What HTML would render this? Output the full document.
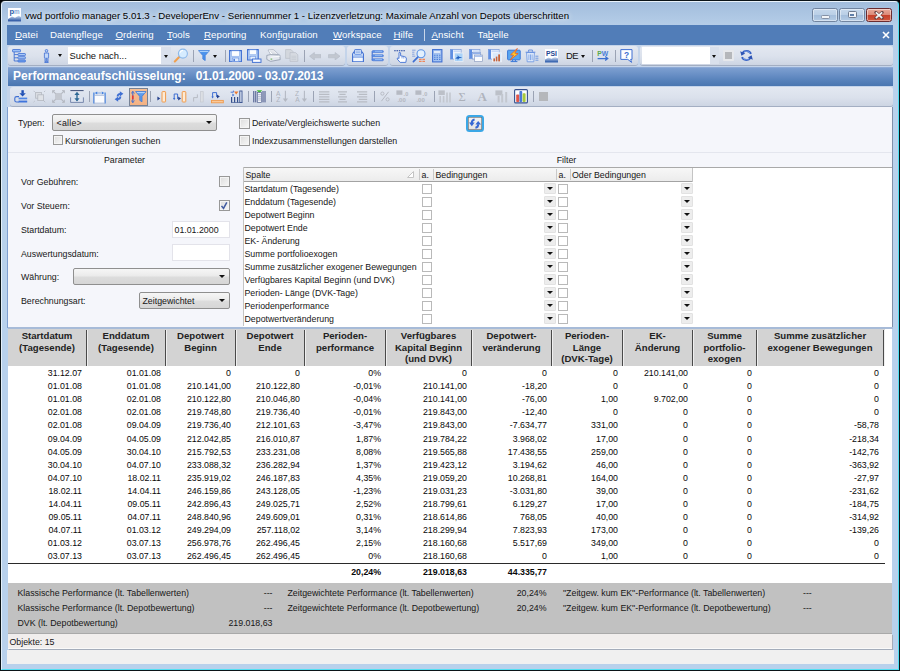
<!DOCTYPE html><html><head><meta charset="utf-8"><title>vwd portfolio manager</title><style>
html,body{margin:0;padding:0;background:#000;}
body{width:900px;height:671px;position:relative;overflow:hidden;font-family:"Liberation Sans",sans-serif;}
div,svg{position:absolute;box-sizing:border-box;}
.t{white-space:nowrap;color:#161616;}
.w{white-space:nowrap;color:#fff;}
.tb{background:linear-gradient(#e3e8f1,#dbe1ec 55%,#cdd5e3);border-radius:3px;box-shadow:0 1px 0 #a3aec2;}
.sep{width:1px;background:#9ba3b4;}
.dd{border:1px solid #8f8f8f;border-radius:2px;background:linear-gradient(#f6f6f6,#ebebeb 45%,#dcdcdc 55%,#d6d6d6);}
.arr{width:0;height:0;border-left:3.5px solid transparent;border-right:3.5px solid transparent;border-top:3.8px solid #111;}
.cb{width:10.6px;height:10.6px;border:1px solid #989898;background:linear-gradient(135deg,#dcdcdc,#f8f8f8);box-shadow:inset 0 0 0 1px #f4f4f4;}
.gcb{width:10px;height:10px;border:1px solid #b9b9b9;background:#fff;}
.inp{border:1px solid #e3e3ea;background:#fff;}
.hd{background:#d3d3d3;}
.num{white-space:nowrap;color:#080808;text-align:right;font-size:8.8px;line-height:13px;height:13px;}
.hc{white-space:nowrap;color:#222;text-align:center;font-weight:bold;font-size:9.6px;line-height:11.5px;}
</style></head><body>
<div style="left:0px;top:0px;width:900px;height:671px;background:#0b1418;border-radius:5px 5px 0 0;"></div>
<div style="left:1px;top:1px;width:898px;height:669px;border-radius:4px 4px 0 0;border:1px solid;border-color:#e9f3fb #52dff2 #52dff2 #e4f0fa;background:linear-gradient(#a2bddc 0px,#b6cee8 24px,#b8d1ec 60px,#b8d1ec 100%);"></div>
<svg style="left:8px;top:8px" width="13" height="13.5" viewBox="0 0 13 13.5"><defs><linearGradient id="apg" x1="0" y1="0" x2="0" y2="1"><stop offset="0" stop-color="#c9d8ee"/><stop offset="1" stop-color="#1c4a9c"/></linearGradient></defs><rect x="0" y="0" width="13" height="13.5" fill="#fdfeff"/><path d="M0 11 L4 8.4 L7 9.8 L10.6 7.8 L13 9 L13 13.5 L0 13.5 Z" fill="url(#apg)"/><text x="1.6" y="6.4" font-family="Liberation Sans" font-weight="bold" font-size="7.6" fill="#2d5ba5">p</text><text x="6" y="5.8" font-family="Liberation Sans" font-weight="bold" font-size="6.4" fill="#86a6d6" textLength="5.6" lengthAdjust="spacingAndGlyphs">m</text></svg>
<div class="t" style="left:25px;top:9.7px;font-size:9.68px;line-height:12px;color:#000;text-shadow:0 0 5px rgba(255,255,255,.85),0 0 8px rgba(255,255,255,.6);">vwd portfolio manager 5.01.3 - DeveloperEnv - Seriennummer 1 - Lizenzverletzung: Maximale Anzahl von Depots überschritten</div>
<div style="left:812px;top:8px;width:25.5px;height:14px;border:1px solid #71849f;border-radius:2.5px;background:linear-gradient(#c6d8ec,#bacfe6 48%,#a4bedc 52%,#b4cbe4);box-shadow:inset 0 0 0 1px rgba(255,255,255,.45);"></div><div style="left:839.3px;top:8px;width:25.4px;height:14px;border:1px solid #71849f;border-radius:2.5px;background:linear-gradient(#c6d8ec,#bacfe6 48%,#a4bedc 52%,#b4cbe4);box-shadow:inset 0 0 0 1px rgba(255,255,255,.45);"></div><div style="left:866px;top:8px;width:26px;height:14px;border:1px solid #6a2c30;border-radius:2.5px;background:linear-gradient(#e9ab9c,#dc8a78 48%,#c6402a 52%,#d0583e);box-shadow:inset 0 0 0 1px rgba(255,255,255,.45);"></div><div style="left:820.6px;top:14.6px;width:9px;height:4.4px;background:#f1f4f8;border:1px solid #8591a5;border-radius:1.5px;"></div><div style="left:847.8px;top:11.3px;width:9px;height:7px;background:#f0f3f8;border:1px solid #6f7b8e;border-radius:1.5px;"></div><div style="left:850.3px;top:13.8px;width:4px;height:2.5px;background:#5f7fa9;"></div><svg style="left:874px;top:11px" width="10" height="8.5" viewBox="0 0 10 8.5"><path d="M1.8 1.4 L8.2 7 M8.2 1.4 L1.8 7" stroke="#6a4444" stroke-width="3" stroke-linecap="round"/><path d="M1.8 1.4 L8.2 7 M8.2 1.4 L1.8 7" stroke="#f4f4f4" stroke-width="1.7" stroke-linecap="butt"/></svg>
<div style="left:7px;top:25px;width:886px;height:20px;background:#517db8;"></div>
<div class="w" style="left:15px;top:29.0px;font-size:9.7px;line-height:12px;color:#fff;letter-spacing:0.05px;"><u>D</u>atei</div>
<div class="w" style="left:50px;top:29.0px;font-size:9.7px;line-height:12px;color:#fff;letter-spacing:0.05px;">Daten<u>p</u>flege</div>
<div class="w" style="left:115.5px;top:29.0px;font-size:9.7px;line-height:12px;color:#fff;letter-spacing:0.05px;"><u>O</u>rdering</div>
<div class="w" style="left:167px;top:29.0px;font-size:9.7px;line-height:12px;color:#fff;letter-spacing:0.05px;"><u>T</u>ools</div>
<div class="w" style="left:204px;top:29.0px;font-size:9.7px;line-height:12px;color:#fff;letter-spacing:0.05px;"><u>R</u>eporting</div>
<div class="w" style="left:260px;top:29.0px;font-size:9.7px;line-height:12px;color:#fff;letter-spacing:0.05px;">Kon<u>f</u>iguration</div>
<div class="w" style="left:333px;top:29.0px;font-size:9.7px;line-height:12px;color:#fff;letter-spacing:0.05px;"><u>W</u>orkspace</div>
<div class="w" style="left:393.5px;top:29.0px;font-size:9.7px;line-height:12px;color:#fff;letter-spacing:0.05px;"><u>H</u>ilfe</div>
<div class="w" style="left:431.5px;top:29.0px;font-size:9.7px;line-height:12px;color:#fff;letter-spacing:0.05px;"><u>A</u>nsicht</div>
<div class="w" style="left:477.5px;top:29.0px;font-size:9.7px;line-height:12px;color:#fff;letter-spacing:0.05px;">Ta<u>b</u>elle</div>
<div style="left:424px;top:29px;width:1px;height:12px;background:#c9d6ea;"></div>
<svg style="left:882px;top:30.5px" width="8" height="8" viewBox="0 0 8 8"><path d="M1 1 L7 7 M7 1 L1 7" stroke="#fff" stroke-width="1.6"/></svg>
<div style="left:7px;top:45px;width:886px;height:62px;background:#c4d4ea;"></div>
<div class="tb" style="left:8px;top:46px;width:337px;height:19px;"></div>
<div class="tb" style="left:347px;top:46px;width:41px;height:19px;"></div>
<div class="tb" style="left:390px;top:46px;width:248px;height:19px;"></div>
<div class="tb" style="left:640px;top:46px;width:253px;height:19px;"></div>
<svg style="left:12px;top:49px" width="14" height="14" viewBox="0 0 14 14"><rect x="0.5" y="0.5" width="8" height="2.4" rx="0.6" fill="#9cc0f6" stroke="#3f6fd2" stroke-width="0.8"/><path d="M2.2 3 V12 M2.2 5.6 H6 M2.2 8.8 H6 M2.2 12 H6" stroke="#3f6fd2" stroke-width="0.9" fill="none"/><rect x="6" y="4.5" width="7.4" height="2.1" rx="0.6" fill="#a8c8f8" stroke="#3f6fd2" stroke-width="0.8"/><rect x="6" y="7.7" width="7.4" height="2.1" rx="0.6" fill="#a8c8f8" stroke="#3f6fd2" stroke-width="0.8"/><rect x="6" y="10.9" width="7.4" height="2.1" rx="0.6" fill="#6fa0ee" stroke="#3f6fd2" stroke-width="0.8"/></svg><svg style="left:42.5px;top:49px" width="7" height="14" viewBox="0 0 7 14"><circle cx="3.5" cy="1.8" r="1.3" fill="#b9d2f8" stroke="#3f6fd2" stroke-width="0.8"/><path d="M1.4 4 H5.6 V8.6 H5 V12.8 H3.9 V9.2 H3.1 V12.8 H2 V8.6 H1.4 Z" fill="#c3d8f8" stroke="#3f6fd2" stroke-width="0.8"/><path d="M1.4 13.4 H5.6" stroke="#3f6fd2" stroke-width="0.9"/></svg><div class="arr" style="left:57.8px;top:54.3px;border-left-width:2.5px;border-right-width:2.5px;border-top-width:3px;"></div><div style="left:68px;top:47px;width:93px;height:17px;background:#fff;"></div><div class="t" style="left:69.5px;top:50px;font-size:9.4px;line-height:12px;color:#111;">Suche nach...</div><div style="left:161px;top:47px;width:10px;height:17px;background:#d9e0ec;"></div><div class="arr" style="left:163.5px;top:54.8px;border-left-width:2.5px;border-right-width:2.5px;border-top-width:3px;"></div><svg style="left:173px;top:48px" width="16" height="15" viewBox="0 0 16 15"><path d="M1.8 13.4 L6.2 9" stroke="#f0a050" stroke-width="2.1" stroke-linecap="round"/><circle cx="9.9" cy="5.6" r="4.5" fill="#d6ecff" stroke="#8db9ea" stroke-width="1.1"/><path d="M7 4.6 A3.2 3.2 0 0 1 10 2.4" stroke="#fff" stroke-width="1.2" fill="none"/></svg><div class="sep" style="left:193px;top:49.5px;height:12px;"></div><svg style="left:198px;top:50px" width="12" height="11" viewBox="0 0 12 11"><path d="M0.5 0.6 H11.5 L7.2 5.6 V10.6 L4.8 9 V5.6 Z" fill="#4a92ec" stroke="#3a7ada" stroke-width="0.7" stroke-linejoin="round"/><path d="M1.6 1.5 H10.4" stroke="#a9d0fa" stroke-width="1.1"/></svg><div class="arr" style="left:212.7px;top:54.6px;border-left-width:2.5px;border-right-width:2.5px;border-top-width:3px;"></div><div class="sep" style="left:224.5px;top:49.5px;height:12px;"></div><svg style="left:229px;top:49.5px" width="13" height="12.5" viewBox="0 0 13 12.5"><path d="M0.6 0.6 H12.4 V11.9 H0.6 Z" fill="#b9d2f6" stroke="#3f6fd2" stroke-width="1.1"/><rect x="2.6" y="0.9" width="7.8" height="5.3" fill="#fbfdff" stroke="#7fa4e6" stroke-width="0.5"/><rect x="3.2" y="8" width="6.6" height="3.6" fill="#e4eefc" stroke="#5f8ade" stroke-width="0.6"/><rect x="4.4" y="8.9" width="1.6" height="2.2" fill="#4f7fd8"/></svg><svg style="left:247px;top:48.5px" width="14.5" height="14" viewBox="0 0 14.5 14"><path d="M0.6 0.6 H11.2 V11 H0.6 Z" fill="#b9d2f6" stroke="#3f6fd2" stroke-width="1.1"/><rect x="2.4" y="0.9" width="7" height="4.8" fill="#fbfdff" stroke="#7fa4e6" stroke-width="0.5"/><rect x="3" y="7.2" width="5.6" height="3.4" fill="#e4eefc" stroke="#5f8ade" stroke-width="0.6"/><rect x="5.4" y="10" width="8.6" height="3.4" fill="#e6effc" stroke="#3f6fd2" stroke-width="0.9"/><path d="M7 11.7 H12.6" stroke="#fff" stroke-width="1"/></svg><svg style="left:266px;top:49px" width="15" height="13" viewBox="0 0 15 13"><path d="M2 1 L7.4 0.4 L12.6 5.4 L5 6.2 Z" fill="#fcfdfe" stroke="#a4acbb" stroke-width="0.7"/><path d="M4 2.2 L8 1.8 M5 3.4 L9.4 3 M6 4.6 L10.6 4.2" stroke="#b9c0cc" stroke-width="0.6"/><path d="M0.8 6.4 L4.4 5.6 L13.8 6 L14.2 10.6 L4.6 12.4 L0.8 10.4 Z" fill="#e3e7ee" stroke="#8f99ab" stroke-width="0.8" stroke-linejoin="round"/><path d="M4.6 8.2 L14 7.2" stroke="#fff" stroke-width="0.8"/><rect x="4.6" y="9.6" width="1.6" height="1" fill="#5fb046"/></svg><svg style="left:285px;top:49px" width="13.5" height="13" viewBox="0 0 13.5 13"><path d="M0.6 0.6 H6 L8 2.6 V9.4 H0.6 Z" fill="#d3d7de" stroke="#bcc1cb" stroke-width="0.8"/><path d="M5 3.6 H10.6 L12.8 5.8 V12.4 H5 Z" fill="#d6dae1" stroke="#bcc1cb" stroke-width="0.8"/><path d="M6.4 7.2 H11.2 M6.4 8.8 H11.2 M6.4 10.4 H11.2" stroke="#c2c7d0" stroke-width="0.7"/></svg><div class="sep" style="left:303.5px;top:49.5px;height:12px;"></div><svg style="left:308.5px;top:51.5px" width="12.5" height="8.5" viewBox="0 0 12.5 8.5"><path d="M0.5 4.2 L5.4 0.5 V2.6 H12 V5.8 H5.4 V8 Z" fill="#c2c7d0" stroke="#b4bac6" stroke-width="0.6" stroke-linejoin="round"/></svg><svg style="left:327.5px;top:51.5px" width="12.5" height="8.5" viewBox="0 0 12.5 8.5"><path d="M12 4.2 L7.1 0.5 V2.6 H0.5 V5.8 H7.1 V8 Z" fill="#c2c7d0" stroke="#b4bac6" stroke-width="0.6" stroke-linejoin="round"/></svg><svg style="left:351.5px;top:48.5px" width="12" height="13.5" viewBox="0 0 12 13.5"><path d="M0.6 5 L1.8 3 H10.2 L11.4 5 V12.9 H0.6 Z" fill="#f2f7fe" stroke="#3f6fd2" stroke-width="1.1" stroke-linejoin="round"/><rect x="2.6" y="0.6" width="6.8" height="4.8" rx="0.6" fill="#dce9fb" stroke="#3f6fd2" stroke-width="0.9"/><path d="M3.8 2.2 H8.2 M3.8 3.6 H8.2" stroke="#7fa3e2" stroke-width="0.7"/><path d="M1 8 H11" stroke="#3f6fd2" stroke-width="0.9"/><rect x="1.4" y="5.6" width="9.2" height="2" fill="#a9c6f5"/></svg><svg style="left:370.5px;top:50px" width="13" height="12" viewBox="0 0 13 12"><path d="M1.2 1.4 V10.6" stroke="#3f6fd2" stroke-width="1.1"/><rect x="1.2" y="0.6" width="11.2" height="2" rx="0.8" fill="#5f95ea" stroke="#3f6fd2" stroke-width="0.6"/><rect x="1.2" y="4.7" width="11.2" height="2" rx="0.8" fill="#5f95ea" stroke="#3f6fd2" stroke-width="0.6"/><rect x="1.2" y="8.8" width="11.2" height="2" rx="0.8" fill="#5f95ea" stroke="#3f6fd2" stroke-width="0.6"/><path d="M4 1.3 H11 M4 5.4 H11 M4 9.5 H11" stroke="#a9cbf8" stroke-width="0.7"/></svg><svg style="left:394px;top:50px" width="14" height="13" viewBox="0 0 14 13"><path d="M0.2 0.7 H11.6" stroke="#1c3f9a" stroke-width="1.1" stroke-dasharray="1.5 0.8"/><path d="M5 2.6 Q6 2 6.6 2.8 V5.8 L10.6 6.6 Q12.6 7.2 12.4 9 L11.8 12.4 H6.2 L3.2 9 Q3 7.8 4.2 8 L5 8.6 Z" fill="#fdfeff" stroke="#3f6fd2" stroke-width="0.9" stroke-linejoin="round"/><path d="M8 6.4 V8.4 M9.8 6.8 V8.6" stroke="#3f6fd2" stroke-width="0.6"/></svg><svg style="left:412px;top:49px" width="15" height="14" viewBox="0 0 15 14"><path d="M0.4 1.2 H3.4 M0.4 3.2 H2.6 M0.4 5.2 H2.6 M0.4 7.2 H3.2" stroke="#3f6fd2" stroke-width="0.8" stroke-dasharray="1.3 0.6"/><circle cx="9" cy="4.8" r="4" fill="#e2f0fe" stroke="#5d94e6" stroke-width="1.1"/><path d="M5.8 8.2 L1.4 12.6" stroke="#3f6fd2" stroke-width="1.7" stroke-linecap="round"/><path d="M7 10.4 H13.6 M7 12.4 H13.6" stroke="#f0875a" stroke-width="1.3" stroke-dasharray="2.6 0.8"/></svg><svg style="left:432px;top:49px" width="10.5" height="13.5" viewBox="0 0 10.5 13.5"><rect x="0.6" y="0.6" width="9.3" height="12.3" fill="#a4c4f2" stroke="#3f6fd2" stroke-width="1.1"/><rect x="1.8" y="1.8" width="6.9" height="2.6" fill="#dfeaf9" stroke="#7fa4e6" stroke-width="0.4"/><path d="M2 6.2 H8.6 M2 8.3 H8.6 M2 10.4 H8.6" stroke="#4f7fd8" stroke-width="1.1" stroke-dasharray="1.5 1"/></svg><svg style="left:450px;top:49px" width="13.5" height="13" viewBox="0 0 13.5 13"><rect x="0.5" y="0.5" width="10.6" height="9.6" fill="#eef4fd" stroke="#7fa0dc" stroke-width="0.8"/><path d="M0.5 0.5 H3 V10 H0.5 Z" fill="#5f8fe2"/><rect x="3.6" y="1.4" width="7" height="1.6" fill="#c6d8f6"/><rect x="4.6" y="4" width="8.4" height="8.4" fill="#a9d2f8" stroke="#e9eef6" stroke-width="0.8"/><path d="M5.2 9.6 L8 7.2 L7.2 5.4 L9 7.8 L12.4 8.4 L9 9.2 L7.6 11.6 L7.8 9.8 Z" fill="#1f5fc0"/></svg><svg style="left:469px;top:49px" width="14" height="13.5" viewBox="0 0 14 13.5"><rect x="0.5" y="0.5" width="10.4" height="9.2" fill="#eef4fd" stroke="#7fa0dc" stroke-width="0.8"/><path d="M0.5 0.5 H3 V9.6 H0.5 Z" fill="#5f8fe2"/><rect x="3.6" y="1.4" width="6.8" height="1.4" fill="#c6d8f6"/><rect x="3.4" y="3.4" width="8" height="6.6" fill="#f4f8fe" stroke="#7f9cd2" stroke-width="0.7"/><rect x="3.8" y="3.8" width="7.2" height="1.4" fill="#8fb0ea"/><rect x="5.6" y="6" width="7.8" height="6.6" fill="#fafcff" stroke="#8f9fc0" stroke-width="0.7"/><rect x="6" y="6.4" width="7" height="1.4" fill="#9ab6ea"/></svg><svg style="left:487.5px;top:49px" width="14" height="13.5" viewBox="0 0 14 13.5"><rect x="0.5" y="0.5" width="10.6" height="9.6" fill="#eef4fd" stroke="#7fa0dc" stroke-width="0.8"/><path d="M0.5 0.5 H3 V10 H0.5 Z" fill="#5f8fe2"/><rect x="3.6" y="1.4" width="7" height="1.6" fill="#c6d8f6"/><rect x="4.4" y="3.8" width="9" height="9" fill="#d9e9fb" stroke="#eef2f8" stroke-width="0.8"/><rect x="5.4" y="9.4" width="1.6" height="3" fill="#c8643a"/><rect x="7.8" y="7.6" width="1.6" height="4.8" fill="#c8643a"/><rect x="10.2" y="5.4" width="1.8" height="7" fill="#c8643a"/></svg><svg style="left:506.5px;top:48px" width="14" height="15" viewBox="0 0 14 15"><rect x="0.6" y="2.2" width="12.6" height="9.6" rx="0.8" fill="#58a6f0" stroke="#3a78d8" stroke-width="1"/><path d="M3.6 13.6 H10.4 M5.6 12 V13.4 M8.4 12 V13.4" stroke="#3a78d8" stroke-width="1"/><path d="M10.4 0.4 L3.6 6.8 L6.6 7.2 L3.2 12 L11.2 5.6 L7.8 5.2 Z" fill="#ffcf2a" stroke="#ee5a24" stroke-width="0.8" stroke-linejoin="round"/></svg><svg style="left:525px;top:49px" width="14" height="13.5" viewBox="0 0 14 13.5"><path d="M1.6 3.6 H9.4 L8.8 12.8 H2.2 Z" fill="#e6effc" stroke="#6f98e2" stroke-width="0.9"/><path d="M0.6 3.2 H10.4 M3.6 2.8 V1 H7.4 V2.8" stroke="#5f8ade" stroke-width="0.9" fill="none"/><path d="M3.9 5.4 V11.2 M5.5 5.4 V11.2 M7.1 5.4 V11.2" stroke="#6f98e2" stroke-width="0.8"/><path d="M10.4 7.2 H13.4 M10.4 9.2 H13.4 M10.4 11.2 H13.4" stroke="#6f98e2" stroke-width="1"/></svg><svg style="left:544.5px;top:49px" width="13" height="13.5" viewBox="0 0 13 13.5"><defs><linearGradient id="psg" x1="0" y1="0" x2="0" y2="1"><stop offset="0" stop-color="#dfe8f6"/><stop offset="1" stop-color="#1d4fa4"/></linearGradient></defs><rect x="0" y="0" width="13" height="13.5" fill="#fdfeff"/><path d="M0 10.4 L3.6 8.4 L6.4 9.8 L10 8 L13 9.2 V13.5 H0 Z" fill="url(#psg)"/><text x="1" y="6.6" font-family="Liberation Sans" font-weight="bold" font-size="7" fill="#1f4690" textLength="11" lengthAdjust="spacingAndGlyphs">PSI</text></svg><div class="t" style="left:566px;top:50px;font-size:9.4px;line-height:12px;color:#111;letter-spacing:-0.6px;">DE</div><div class="arr" style="left:580.8px;top:54.6px;border-left-width:2.5px;border-right-width:2.5px;border-top-width:3px;"></div><div class="sep" style="left:592px;top:49.5px;height:12px;"></div><svg style="left:596.5px;top:50px" width="13" height="12" viewBox="0 0 13 12"><text x="0.2" y="5.8" font-family="Liberation Sans" font-weight="bold" font-size="6.8" fill="#5aa84a">P</text><text x="4.8" y="5.8" font-family="Liberation Sans" font-weight="bold" font-size="6.8" fill="#4a7fd8">W</text><path d="M0.6 8.6 H10 M8.2 6.6 L10.8 8.6 L8.2 10.6" stroke="#3a6fd0" stroke-width="1.2" fill="none"/></svg><div class="sep" style="left:615px;top:49.5px;height:12px;"></div><svg style="left:620px;top:48.5px" width="13" height="14" viewBox="0 0 13 14"><path d="M0.8 0.6 H12 V10.4 H10.6 L11.6 13.4 L7.8 10.4 H0.8 Z" fill="#fdfeff" stroke="#3f6fd2" stroke-width="1" stroke-linejoin="round"/><text x="4" y="8.6" font-family="Liberation Sans" font-weight="bold" font-size="8.4" fill="#3f6fd2">?</text></svg><div style="left:642px;top:47px;width:68px;height:17px;background:#fff;"></div><div style="left:710px;top:47px;width:9px;height:17px;background:#d9e0ec;"></div><div class="arr" style="left:711.8px;top:54.8px;border-left-width:2.5px;border-right-width:2.5px;border-top-width:3px;"></div><div style="left:723px;top:50px;width:11px;height:11px;background:#e6e8ec;border-radius:1px;"></div><div style="left:725px;top:52px;width:7px;height:7px;background:#b5b7bb;"></div><svg style="left:740px;top:49px" width="13" height="13" viewBox="0 0 13 13"><path d="M11 4.8 A5 5 0 0 0 2.4 4" stroke="#3560c4" stroke-width="1.9" fill="none"/><path d="M0.2 2.2 L1.4 6.8 L5.2 4.6 Z" fill="#2f55b4"/><path d="M2 8.2 A5 5 0 0 0 10.6 9" stroke="#3560c4" stroke-width="1.9" fill="none"/><path d="M12.8 10.8 L11.6 6.2 L7.8 8.4 Z" fill="#2f55b4"/><path d="M10 4 A4 4 0 0 0 4 3.2 M3 9 A4 4 0 0 0 9 9.8" stroke="#8fb2ee" stroke-width="0.6" fill="none"/></svg>
<div style="left:8px;top:67px;width:885px;height:19px;background:linear-gradient(#7d9fd0,#6a90c6 35%,#5681ba 70%,#4a76b0);border-top:1px solid #8eaad6;"></div>
<div class="w" style="left:13px;top:70.0px;font-size:12.05px;line-height:12px;color:#fff;font-weight:bold;">Performanceaufschlüsselung:&nbsp;&nbsp; <span style='letter-spacing:-0.16px'>01.01.2000 - 03.07.2013</span></div>
<div class="tb" style="left:10px;top:87px;width:883px;height:19px;"></div>
<svg style="left:14px;top:90px" width="14" height="13" viewBox="0 0 14 13"><path d="M8.6 0.2 V3.6" stroke="#1f4fb4" stroke-width="2.4"/><path d="M5.4 3.2 H11.8 L8.6 6.6 Z" fill="#1f4fb4"/><path d="M5 6.6 H2.6 Q0.8 6.6 0.8 8.2 V10.4 Q0.8 12 2.6 12 H5" fill="none" stroke="#3f6fd2" stroke-width="1.1"/><rect x="4.6" y="7.6" width="8.6" height="1.7" fill="#4f86e6"/><rect x="4.6" y="10.6" width="8.6" height="1.9" fill="#3f74dc"/></svg><svg style="left:33px;top:90px" width="13" height="13" viewBox="0 0 13 13"><rect x="2.6" y="2.4" width="5.8" height="5.8" fill="#d9dce2" stroke="#b4b8c1" stroke-width="0.8"/><rect x="4.8" y="4.8" width="5.8" height="5.8" fill="#dfe2e7" stroke="#b4b8c1" stroke-width="0.8"/><path d="M0.6 0.8 L1.8 2 M12.2 0.8 L11 2 M0.6 12.2 L1.8 11 M12.2 12.2 L11 11" stroke="#b4b8c1" stroke-width="0.8"/></svg><svg style="left:52px;top:90px" width="13" height="13" viewBox="0 0 13 13"><rect x="3.6" y="3.6" width="5.8" height="5.8" fill="#c3c7cf" stroke="#b9bdc6" stroke-width="0.6"/><path d="M0.8 1 L3.6 3.6 M12.2 1 L9.4 3.6 M0.8 12 L3.6 9.4 M12.2 12 L9.4 9.4" stroke="#b4b8c1" stroke-width="1.2"/><path d="M0.4 3.2 V0.6 H3 M10 0.6 H12.6 V3.2 M0.4 9.8 V12.4 H3 M10 12.4 H12.6 V9.8" stroke="#b4b8c1" stroke-width="0.9" fill="none"/></svg><svg style="left:70px;top:90px" width="14" height="13" viewBox="0 0 14 13"><path d="M0.4 0.6 H13.6" stroke="#3f5078" stroke-width="1"/><path d="M0.6 7.4 V12.4 H13.4 V7.4" stroke="#6d7fa6" stroke-width="0.9" fill="#dde4f0"/><path d="M7 3 V10.4" stroke="#2f6a96" stroke-width="1.4"/><path d="M4.4 5 L7 1.8 L9.6 5 Z M4.4 8.2 L7 11.4 L9.6 8.2 Z" fill="#2f6a96"/></svg><div class="sep" style="left:88.5px;top:90.5px;height:11.5px;"></div><svg style="left:93px;top:90.5px" width="13" height="13" viewBox="0 0 13 13"><path d="M0.9 1.4 V12.4 M12.1 1.4 V12.4" stroke="#3f7fe0" stroke-width="1.2"/><rect x="1.6" y="4.4" width="9.8" height="7.6" fill="#fafbfe" stroke="#9ab0d8" stroke-width="0.6"/><path d="M4.4 2 H8.6" stroke="#3f7fe0" stroke-width="0.9" stroke-dasharray="1.2 0.8"/><path d="M1.8 2 L4.2 0.4 V3.6 Z M11.2 2 L8.8 0.4 V3.6 Z" fill="#3f7fe0"/></svg><svg style="left:113px;top:91px" width="12" height="11" viewBox="0 0 12 11"><path d="M4.6 5.4 Q4.6 2.8 7.4 2.8" stroke="#3f6fd2" stroke-width="1.8" fill="none"/><path d="M6.8 0.2 L10.4 2.8 L6.8 5.4 Z" fill="#3f6fd2"/><path d="M7.4 5.6 Q7.4 8.2 4.6 8.2" stroke="#3f6fd2" stroke-width="1.8" fill="none"/><path d="M5.2 10.8 L1.6 8.2 L5.2 5.6 Z" fill="#3f6fd2"/></svg><div style="left:129px;top:87.5px;width:19px;height:18.5px;background:linear-gradient(#f6bf95,#f3b184);border:1px solid #768296;"></div><svg style="left:131px;top:90.5px" width="16" height="12" viewBox="0 0 16 12"><path d="M1.8 0.6 V11.4" stroke="#3f6fd2" stroke-width="1.1"/><path d="M0.2 2.6 L1.8 0.2 L3.4 2.6 M0.2 9.4 L1.8 11.8 L3.4 9.4" stroke="#3f6fd2" stroke-width="0.8" fill="none"/><path d="M1.8 4.6 V8.2" stroke="#f0332a" stroke-width="1.5"/><path d="M4.6 0.6 H15 L11 5.4 V10.8 L8.8 9.4 V5.4 Z" fill="#5f9cec" stroke="#3a78d8" stroke-width="0.8" stroke-linejoin="round"/><path d="M5.8 1.6 H13.8" stroke="#b9d8fb" stroke-width="1"/></svg><div class="sep" style="left:149.5px;top:90.5px;height:11.5px;"></div><svg style="left:156.5px;top:90.5px" width="10" height="12" viewBox="0 0 10 12"><path d="M0.4 5.4 L3.2 7.4 L0.4 9.4 Z" fill="#24408c"/><rect x="5" y="0.6" width="3.6" height="10.4" rx="0.6" fill="#fdebd6" stroke="#f09a4c" stroke-width="1"/></svg><svg style="left:173px;top:90.5px" width="13.5" height="12" viewBox="0 0 13.5 12"><path d="M1.2 8 V3 H4.6 V8" fill="none" stroke="#3f6fd2" stroke-width="1"/><path d="M0 7 L1.2 9.2 L2.4 7" fill="#3f6fd2"/><path d="M5.2 5.4 L8 7.4 L5.2 9.4 Z" fill="#24408c"/><rect x="9.2" y="0.6" width="3.6" height="10.4" rx="0.6" fill="#fdebd6" stroke="#f09a4c" stroke-width="1"/></svg><svg style="left:193px;top:90.5px" width="11" height="12" viewBox="0 0 11 12"><path d="M0.6 10.6 V6.6 H4.4 V3.4" fill="none" stroke="#b4b8c1" stroke-width="0.9"/><rect x="7.4" y="0.6" width="2.8" height="10.4" fill="#dcdfe4" stroke="#c6cad2" stroke-width="0.8"/></svg><svg style="left:211px;top:90.5px" width="13" height="13" viewBox="0 0 13 13"><path d="M1.6 6.4 V1.6 H5.6 V6" fill="none" stroke="#3f6fd2" stroke-width="1"/><path d="M0.4 5.4 L1.6 7.6 L2.8 5.4" fill="#3f6fd2"/><path d="M6 3.4 L8.8 5.4 L6 7.4 Z" fill="#24408c"/><rect x="0.5" y="9.4" width="11.8" height="2.4" fill="#f9c99a" stroke="#f09a4c" stroke-width="0.9"/></svg><svg style="left:230px;top:90px" width="13" height="13" viewBox="0 0 13 13"><path d="M0.6 2.2 H3.4 V0.6" stroke="#3f6fd2" stroke-width="0.9" fill="none"/><path d="M2.4 3.6 L4.4 5 L2.4 6.4" fill="#3f6fd2"/><path d="M4 1.6 H8.4 L6.2 4.4 Z" fill="#ee7a30"/><path d="M1.6 7 V12.4 M4.6 7 V12.4 M7.6 7 V12.4" stroke="#35508e" stroke-width="1.2"/><rect x="9.8" y="1" width="2.2" height="11.4" fill="#e6ecf7" stroke="#35508e" stroke-width="0.9"/><path d="M1 12.6 H12.4" stroke="#35508e" stroke-width="0.7"/></svg><div class="sep" style="left:248px;top:90.5px;height:11.5px;"></div><svg style="left:253px;top:90px" width="13" height="13" viewBox="0 0 13 13"><path d="M3.6 0.2 H9.2 L6.4 3.2 Z" fill="#45b83a"/><path d="M0.8 1 V12.4 M2.8 1 V12.4" stroke="#2f3f7a" stroke-width="0.9"/><path d="M10 1 V12.4 M12 1 V12.4" stroke="#2f3f7a" stroke-width="0.9"/><rect x="4.4" y="2.6" width="4.2" height="9.8" fill="#f2f5fa" stroke="#5a6a96" stroke-width="0.7"/><path d="M5 4.6 H8 M5 6.4 H8 M5 8.2 H8 M5 10 H8" stroke="#8f9ab8" stroke-width="0.6"/></svg><div class="sep" style="left:271px;top:90.5px;height:11.5px;"></div><svg style="left:275.5px;top:90px" width="13" height="13" viewBox="0 0 13 13"><text x="0" y="5.6" font-family="Liberation Sans" font-size="6.6" fill="#aeb3bd">A</text><text x="0.2" y="12.2" font-family="Liberation Sans" font-size="6.6" fill="#aeb3bd">Z</text><path d="M9.4 0.8 V10.4" stroke="#b4b9c3" stroke-width="1.1"/><path d="M6.8 8.4 L9.4 12 L12 8.4 Z" fill="#b4b9c3"/></svg><svg style="left:295px;top:90px" width="13" height="13" viewBox="0 0 13 13"><text x="0" y="5.6" font-family="Liberation Sans" font-size="6.6" fill="#aeb3bd">Z</text><text x="0.2" y="12.2" font-family="Liberation Sans" font-size="6.6" fill="#aeb3bd">A</text><path d="M9.4 0.8 V10.4" stroke="#b4b9c3" stroke-width="1.1"/><path d="M6.8 8.4 L9.4 12 L12 8.4 Z" fill="#b4b9c3"/></svg><div class="sep" style="left:312.5px;top:90.5px;height:11.5px;"></div><svg style="left:318.5px;top:90.5px" width="11" height="12" viewBox="0 0 11 12"><path d="M0 0.8 H10.4 M0 3.3 H10.4 M0 5.8 H10.4 M0 8.3 H10.4 M0 10.8 H10.4" stroke="#b8bcc4" stroke-width="1.3"/></svg><svg style="left:338px;top:90.5px" width="10" height="12" viewBox="0 0 10 12"><path d="M0 0.8 H9 M1.4 3.3 H7.6 M0 5.8 H9 M1.4 8.3 H7.6 M0 10.8 H9" stroke="#b8bcc4" stroke-width="1.3"/></svg><svg style="left:356.5px;top:90.5px" width="11" height="12" viewBox="0 0 11 12"><path d="M0 0.8 H10.2 M1.8 3.3 H10.2 M0 5.8 H10.2 M1.8 8.3 H10.2 M0 10.8 H10.2" stroke="#b8bcc4" stroke-width="1.3"/></svg><div class="sep" style="left:373.5px;top:90.5px;height:11.5px;"></div><svg style="left:379.5px;top:91px" width="10" height="11" viewBox="0 0 10 11"><path d="M8.6 0.8 L1.4 10.2" stroke="#b4b8c1" stroke-width="1"/><circle cx="2.4" cy="2.6" r="1.6" fill="none" stroke="#b4b8c1" stroke-width="0.9"/><circle cx="7.6" cy="8.4" r="1.6" fill="none" stroke="#b4b8c1" stroke-width="0.9"/></svg><svg style="left:396px;top:90px" width="14" height="13" viewBox="0 0 14 13"><rect x="0.4" y="0.4" width="6" height="4.4" fill="#b6bac3"/><text x="7.6" y="6" font-family="Liberation Sans" font-size="5.6" font-weight="bold" fill="#b4b8c1">.0</text><text x="1.4" y="12.2" font-family="Liberation Sans" font-size="6" font-weight="bold" fill="#b4b8c1">.00</text></svg><svg style="left:415px;top:90px" width="14" height="13" viewBox="0 0 14 13"><rect x="0.4" y="0.4" width="6" height="4.4" fill="#b6bac3"/><text x="7.6" y="6" font-family="Liberation Sans" font-size="5.6" font-weight="bold" fill="#b4b8c1">.0</text><text x="1.4" y="12.2" font-family="Liberation Sans" font-size="6" font-weight="bold" fill="#b4b8c1">.00</text></svg><div class="sep" style="left:434px;top:90.5px;height:11.5px;"></div><svg style="left:438px;top:90px" width="13" height="13" viewBox="0 0 13 13"><rect x="0.4" y="0.4" width="6.4" height="4.6" fill="#bcc0c8"/><path d="M2.2 6 V12.4 M5.6 6 V12.4 M9 2.6 V12.4 M12 2.6 V12.4" stroke="#c3c7cf" stroke-width="1.6"/></svg><div class="t" style="left:458.5px;top:89.5px;font-size:12.5px;line-height:14px;color:#adb1ba;font-family:'Liberation Serif',serif;">Σ</div><div class="t" style="left:477.5px;top:90px;font-size:13px;line-height:14px;color:#b0b4bd;font-weight:bold;font-family:'Liberation Serif',serif;">A</div><svg style="left:494.5px;top:89.5px" width="13" height="13" viewBox="0 0 13 13"><rect x="0.4" y="0.4" width="7" height="5" fill="#bcc0c8"/><path d="M3.6 6 V12.6 M7.2 4 V12.6 M11.2 2 V12.6" stroke="#c3c7cf" stroke-width="2"/></svg><svg style="left:514px;top:89px" width="14" height="14.5" viewBox="0 0 14 14.5"><rect x="0.6" y="0.6" width="12.8" height="13.3" rx="1" fill="#fbfcfe" stroke="#35508e" stroke-width="1.1"/><rect x="2.2" y="5.4" width="3" height="7.6" rx="0.8" fill="#e0564a"/><rect x="5.4" y="2" width="2.8" height="11" rx="0.8" fill="#4a78d8"/><rect x="8.6" y="4.2" width="3" height="8.8" rx="0.8" fill="#a8c83a"/></svg><div class="sep" style="left:532.5px;top:90.5px;height:11.5px;"></div><div style="left:539px;top:92px;width:9px;height:9px;background:#b5b7bb;"></div>
<div style="left:7px;top:107px;width:886px;height:221px;background:#f5f6fb;border-left:1px solid #7f9fd0;"></div>
<div style="left:8px;top:152px;width:884px;height:1px;background:#e4e6ee;"></div>
<div style="left:892px;top:107px;width:1px;height:221px;background:#8090aa;"></div>
<div style="left:8px;top:327px;width:885px;height:2px;background:#a7bbd8;"></div>
<div class="t" style="left:18px;top:117.0px;font-size:8.8px;line-height:12px;">Typen:</div>
<div class="dd" style="left:52px;top:114px;width:164.5px;height:17px;"></div>
<div class="t" style="left:56.5px;top:117.0px;font-size:8.8px;line-height:12px;letter-spacing:0.25px;">&lt;alle&gt;</div>
<div class="arr" style="left:205.8px;top:121.2px;"></div>
<div class="cb" style="left:52.5px;top:134.5px;"></div>
<div class="t" style="left:65px;top:134.5px;font-size:8.8px;line-height:12px;">Kursnotierungen suchen</div>
<div class="cb" style="left:239px;top:118px;"></div>
<div class="t" style="left:252px;top:117.0px;font-size:8.8px;line-height:12px;">Derivate/Vergleichswerte suchen</div>
<div class="cb" style="left:239px;top:135px;"></div>
<div class="t" style="left:252px;top:134.5px;font-size:8.8px;line-height:12px;">Indexzusammenstellungen darstellen</div>
<div style="left:466px;top:114.5px;width:18px;height:17px;border:2px solid #3ba7e6;border-radius:3.5px;background:linear-gradient(#f4f4f4,#e2e2e2);"></div><svg style="left:468px;top:116.5px" width="14" height="13" viewBox="0 0 14 13"><rect x="0.5" y="0.5" width="13" height="12" fill="none" stroke="#333" stroke-width="0.9" stroke-dasharray="1 1"/><path d="M6.6 2.4 Q3.8 2.8 3.8 6" stroke="#3568d4" stroke-width="2" fill="none"/><path d="M1 5.6 L3.8 9.2 L6.6 5.6 Z" fill="#3568d4"/><path d="M7.4 10.8 Q10.2 10.4 10.2 7.2" stroke="#3568d4" stroke-width="2" fill="none"/><path d="M13 7.6 L10.2 4 L7.4 7.6 Z" fill="#3568d4"/></svg>
<div class="t" style="left:24.5px;width:200px;text-align:center;top:153.5px;font-size:8.8px;line-height:12px;">Parameter</div>
<div class="t" style="left:466.5px;width:200px;text-align:center;top:153.5px;font-size:8.8px;line-height:12px;">Filter</div>
<div class="t" style="left:21px;top:176.0px;font-size:8.8px;line-height:12px;">Vor Gebühren:</div>
<div class="cb" style="left:219px;top:176px;"></div>
<div class="t" style="left:21px;top:200.0px;font-size:8.8px;line-height:12px;">Vor Steuern:</div>
<div class="cb" style="left:219px;top:200px;"></div>
<svg style="left:220px;top:201px" width="9" height="9" viewBox="0 0 9 9"><path d="M1.5 4.9 L3.5 7.4 L6.8 1.4" fill="none" stroke="#3f5aa0" stroke-width="1.5"/></svg>
<div class="t" style="left:21px;top:224.0px;font-size:8.8px;line-height:12px;">Startdatum:</div>
<div class="inp" style="left:172px;top:221px;width:58px;height:17px;"></div>
<div class="t" style="left:174.5px;top:223.5px;font-size:8.8px;line-height:12px;">01.01.2000</div>
<div class="t" style="left:21px;top:247.5px;font-size:8.8px;line-height:12px;">Auswertungsdatum:</div>
<div class="inp" style="left:172px;top:244px;width:58px;height:17px;"></div>
<div class="t" style="left:21px;top:271.0px;font-size:8.8px;line-height:12px;">Währung:</div>
<div class="dd" style="left:73px;top:268px;width:157px;height:17px;"></div>
<div class="arr" style="left:219.3px;top:275px;"></div>
<div class="t" style="left:21px;top:295.0px;font-size:8.8px;line-height:12px;">Berechnungsart:</div>
<div class="dd" style="left:139px;top:292px;width:91px;height:17px;"></div>
<div class="t" style="left:142.5px;top:294.5px;font-size:8.8px;line-height:12px;">Zeitgewichtet</div>
<div class="arr" style="left:219.3px;top:299px;"></div>
<div style="left:243px;top:167px;width:649px;height:160px;background:#fff;border-top:1px solid #a9a9a9;"></div>
<div style="left:243px;top:167px;width:450px;height:15px;background:linear-gradient(#f7f7f7,#ececec);border-top:1px solid #a9a9a9;border-bottom:1px solid #a3a3a3;"></div>
<div style="left:419px;top:169px;width:1px;height:11px;background:#c9c9c9;"></div>
<div style="left:433px;top:169px;width:1px;height:11px;background:#c9c9c9;"></div>
<div style="left:556px;top:169px;width:1px;height:11px;background:#c9c9c9;"></div>
<div style="left:570px;top:169px;width:1px;height:11px;background:#c9c9c9;"></div>
<div style="left:243px;top:167px;width:1px;height:159px;background:#c4c4c4;"></div>
<div style="left:692px;top:168px;width:1px;height:14px;background:#c4c4c4;"></div>
<div class="t" style="left:245.5px;top:168.5px;font-size:8.8px;line-height:12px;">Spalte</div>
<div class="t" style="left:421.5px;top:168.5px;font-size:8.8px;line-height:12px;">a.</div>
<div class="t" style="left:435.5px;top:168.5px;font-size:8.8px;line-height:12px;">Bedingungen</div>
<div class="t" style="left:558.5px;top:168.5px;font-size:8.8px;line-height:12px;">a.</div>
<div class="t" style="left:572px;top:168.5px;font-size:8.8px;line-height:12px;">Oder Bedingungen</div>
<svg style="left:407px;top:171px" width="8" height="7" viewBox="0 0 8 7"><path d="M0.5 6.5 L6.5 0.5 L6.5 6.5 Z" fill="#fff" stroke="#c4c4c4" stroke-width="1"/></svg>
<div class="t" style="left:244.5px;top:183.0px;font-size:8.8px;line-height:12px;">Startdatum (Tagesende)</div>
<div class="gcb" style="left:421.5px;top:183.5px;"></div>
<div class="gcb" style="left:557.8px;top:183.5px;"></div>
<div style="left:544px;top:182.5px;width:12px;height:11.5px;background:#ededed;border:1px solid #e2e2e2;border-radius:1px;"></div>
<div class="arr" style="left:546.5px;top:186.5px;border-left-width:3.5px;border-right-width:3.5px;border-top-width:3.5px;"></div>
<div style="left:681px;top:182.5px;width:12px;height:11.5px;background:#ededed;border:1px solid #e2e2e2;border-radius:1px;"></div>
<div class="arr" style="left:683.5px;top:186.5px;border-left-width:3.5px;border-right-width:3.5px;border-top-width:3.5px;"></div>
<div class="t" style="left:244.5px;top:196.0px;font-size:8.8px;line-height:12px;">Enddatum (Tagesende)</div>
<div class="gcb" style="left:421.5px;top:196.5px;"></div>
<div class="gcb" style="left:557.8px;top:196.5px;"></div>
<div style="left:544px;top:195.5px;width:12px;height:11.5px;background:#ededed;border:1px solid #e2e2e2;border-radius:1px;"></div>
<div class="arr" style="left:546.5px;top:199.5px;border-left-width:3.5px;border-right-width:3.5px;border-top-width:3.5px;"></div>
<div style="left:681px;top:195.5px;width:12px;height:11.5px;background:#ededed;border:1px solid #e2e2e2;border-radius:1px;"></div>
<div class="arr" style="left:683.5px;top:199.5px;border-left-width:3.5px;border-right-width:3.5px;border-top-width:3.5px;"></div>
<div class="t" style="left:244.5px;top:209.0px;font-size:8.8px;line-height:12px;">Depotwert Beginn</div>
<div class="gcb" style="left:421.5px;top:209.5px;"></div>
<div class="gcb" style="left:557.8px;top:209.5px;"></div>
<div style="left:544px;top:208.5px;width:12px;height:11.5px;background:#ededed;border:1px solid #e2e2e2;border-radius:1px;"></div>
<div class="arr" style="left:546.5px;top:212.5px;border-left-width:3.5px;border-right-width:3.5px;border-top-width:3.5px;"></div>
<div style="left:681px;top:208.5px;width:12px;height:11.5px;background:#ededed;border:1px solid #e2e2e2;border-radius:1px;"></div>
<div class="arr" style="left:683.5px;top:212.5px;border-left-width:3.5px;border-right-width:3.5px;border-top-width:3.5px;"></div>
<div class="t" style="left:244.5px;top:222.0px;font-size:8.8px;line-height:12px;">Depotwert Ende</div>
<div class="gcb" style="left:421.5px;top:222.5px;"></div>
<div class="gcb" style="left:557.8px;top:222.5px;"></div>
<div style="left:544px;top:221.5px;width:12px;height:11.5px;background:#ededed;border:1px solid #e2e2e2;border-radius:1px;"></div>
<div class="arr" style="left:546.5px;top:225.5px;border-left-width:3.5px;border-right-width:3.5px;border-top-width:3.5px;"></div>
<div style="left:681px;top:221.5px;width:12px;height:11.5px;background:#ededed;border:1px solid #e2e2e2;border-radius:1px;"></div>
<div class="arr" style="left:683.5px;top:225.5px;border-left-width:3.5px;border-right-width:3.5px;border-top-width:3.5px;"></div>
<div class="t" style="left:244.5px;top:235.0px;font-size:8.8px;line-height:12px;">EK- Änderung</div>
<div class="gcb" style="left:421.5px;top:235.5px;"></div>
<div class="gcb" style="left:557.8px;top:235.5px;"></div>
<div style="left:544px;top:234.5px;width:12px;height:11.5px;background:#ededed;border:1px solid #e2e2e2;border-radius:1px;"></div>
<div class="arr" style="left:546.5px;top:238.5px;border-left-width:3.5px;border-right-width:3.5px;border-top-width:3.5px;"></div>
<div style="left:681px;top:234.5px;width:12px;height:11.5px;background:#ededed;border:1px solid #e2e2e2;border-radius:1px;"></div>
<div class="arr" style="left:683.5px;top:238.5px;border-left-width:3.5px;border-right-width:3.5px;border-top-width:3.5px;"></div>
<div class="t" style="left:244.5px;top:248.0px;font-size:8.8px;line-height:12px;">Summe portfolioexogen</div>
<div class="gcb" style="left:421.5px;top:248.5px;"></div>
<div class="gcb" style="left:557.8px;top:248.5px;"></div>
<div style="left:544px;top:247.5px;width:12px;height:11.5px;background:#ededed;border:1px solid #e2e2e2;border-radius:1px;"></div>
<div class="arr" style="left:546.5px;top:251.5px;border-left-width:3.5px;border-right-width:3.5px;border-top-width:3.5px;"></div>
<div style="left:681px;top:247.5px;width:12px;height:11.5px;background:#ededed;border:1px solid #e2e2e2;border-radius:1px;"></div>
<div class="arr" style="left:683.5px;top:251.5px;border-left-width:3.5px;border-right-width:3.5px;border-top-width:3.5px;"></div>
<div class="t" style="left:244.5px;top:261.0px;font-size:8.8px;line-height:12px;">Summe zusätzlicher exogener Bewegungen</div>
<div class="gcb" style="left:421.5px;top:261.5px;"></div>
<div class="gcb" style="left:557.8px;top:261.5px;"></div>
<div style="left:544px;top:260.5px;width:12px;height:11.5px;background:#ededed;border:1px solid #e2e2e2;border-radius:1px;"></div>
<div class="arr" style="left:546.5px;top:264.5px;border-left-width:3.5px;border-right-width:3.5px;border-top-width:3.5px;"></div>
<div style="left:681px;top:260.5px;width:12px;height:11.5px;background:#ededed;border:1px solid #e2e2e2;border-radius:1px;"></div>
<div class="arr" style="left:683.5px;top:264.5px;border-left-width:3.5px;border-right-width:3.5px;border-top-width:3.5px;"></div>
<div class="t" style="left:244.5px;top:274.0px;font-size:8.8px;line-height:12px;">Verfügbares Kapital Beginn (und DVK)</div>
<div class="gcb" style="left:421.5px;top:274.5px;"></div>
<div class="gcb" style="left:557.8px;top:274.5px;"></div>
<div style="left:544px;top:273.5px;width:12px;height:11.5px;background:#ededed;border:1px solid #e2e2e2;border-radius:1px;"></div>
<div class="arr" style="left:546.5px;top:277.5px;border-left-width:3.5px;border-right-width:3.5px;border-top-width:3.5px;"></div>
<div style="left:681px;top:273.5px;width:12px;height:11.5px;background:#ededed;border:1px solid #e2e2e2;border-radius:1px;"></div>
<div class="arr" style="left:683.5px;top:277.5px;border-left-width:3.5px;border-right-width:3.5px;border-top-width:3.5px;"></div>
<div class="t" style="left:244.5px;top:287.0px;font-size:8.8px;line-height:12px;">Perioden- Länge (DVK-Tage)</div>
<div class="gcb" style="left:421.5px;top:287.5px;"></div>
<div class="gcb" style="left:557.8px;top:287.5px;"></div>
<div style="left:544px;top:286.5px;width:12px;height:11.5px;background:#ededed;border:1px solid #e2e2e2;border-radius:1px;"></div>
<div class="arr" style="left:546.5px;top:290.5px;border-left-width:3.5px;border-right-width:3.5px;border-top-width:3.5px;"></div>
<div style="left:681px;top:286.5px;width:12px;height:11.5px;background:#ededed;border:1px solid #e2e2e2;border-radius:1px;"></div>
<div class="arr" style="left:683.5px;top:290.5px;border-left-width:3.5px;border-right-width:3.5px;border-top-width:3.5px;"></div>
<div class="t" style="left:244.5px;top:300.0px;font-size:8.8px;line-height:12px;">Periodenperformance</div>
<div class="gcb" style="left:421.5px;top:300.5px;"></div>
<div class="gcb" style="left:557.8px;top:300.5px;"></div>
<div style="left:544px;top:299.5px;width:12px;height:11.5px;background:#ededed;border:1px solid #e2e2e2;border-radius:1px;"></div>
<div class="arr" style="left:546.5px;top:303.5px;border-left-width:3.5px;border-right-width:3.5px;border-top-width:3.5px;"></div>
<div style="left:681px;top:299.5px;width:12px;height:11.5px;background:#ededed;border:1px solid #e2e2e2;border-radius:1px;"></div>
<div class="arr" style="left:683.5px;top:303.5px;border-left-width:3.5px;border-right-width:3.5px;border-top-width:3.5px;"></div>
<div class="t" style="left:244.5px;top:313.0px;font-size:8.8px;line-height:12px;">Depotwertveränderung</div>
<div class="gcb" style="left:421.5px;top:313.5px;"></div>
<div class="gcb" style="left:557.8px;top:313.5px;"></div>
<div style="left:544px;top:312.5px;width:12px;height:11.5px;background:#ededed;border:1px solid #e2e2e2;border-radius:1px;"></div>
<div class="arr" style="left:546.5px;top:316.5px;border-left-width:3.5px;border-right-width:3.5px;border-top-width:3.5px;"></div>
<div style="left:681px;top:312.5px;width:12px;height:11.5px;background:#ededed;border:1px solid #e2e2e2;border-radius:1px;"></div>
<div class="arr" style="left:683.5px;top:316.5px;border-left-width:3.5px;border-right-width:3.5px;border-top-width:3.5px;"></div>
<div style="left:8px;top:329px;width:884.3px;height:254px;background:#fff;"></div>
<div class="hd" style="left:8px;top:329px;width:877px;height:37px;"></div>
<div style="left:86px;top:330px;width:1px;height:36px;background:#4a4a4a;"></div>
<div style="left:87px;top:330px;width:1px;height:36px;background:#efefef;"></div>
<div style="left:165px;top:330px;width:1px;height:36px;background:#4a4a4a;"></div>
<div style="left:166px;top:330px;width:1px;height:36px;background:#efefef;"></div>
<div style="left:235px;top:330px;width:1px;height:36px;background:#4a4a4a;"></div>
<div style="left:236px;top:330px;width:1px;height:36px;background:#efefef;"></div>
<div style="left:304px;top:330px;width:1px;height:36px;background:#4a4a4a;"></div>
<div style="left:305px;top:330px;width:1px;height:36px;background:#efefef;"></div>
<div style="left:385px;top:330px;width:1px;height:36px;background:#4a4a4a;"></div>
<div style="left:386px;top:330px;width:1px;height:36px;background:#efefef;"></div>
<div style="left:471px;top:330px;width:1px;height:36px;background:#4a4a4a;"></div>
<div style="left:472px;top:330px;width:1px;height:36px;background:#efefef;"></div>
<div style="left:551px;top:330px;width:1px;height:36px;background:#4a4a4a;"></div>
<div style="left:552px;top:330px;width:1px;height:36px;background:#efefef;"></div>
<div style="left:622px;top:330px;width:1px;height:36px;background:#4a4a4a;"></div>
<div style="left:623px;top:330px;width:1px;height:36px;background:#efefef;"></div>
<div style="left:692px;top:330px;width:1px;height:36px;background:#4a4a4a;"></div>
<div style="left:693px;top:330px;width:1px;height:36px;background:#efefef;"></div>
<div style="left:756px;top:330px;width:1px;height:36px;background:#4a4a4a;"></div>
<div style="left:757px;top:330px;width:1px;height:36px;background:#efefef;"></div>
<div style="left:883px;top:330px;width:1px;height:36px;background:#4a4a4a;"></div>
<div style="left:884px;top:330px;width:1px;height:36px;background:#efefef;"></div>
<div class="hc" style="left:8px;width:78px;top:330px;">Startdatum<br>(Tagesende)</div>
<div class="hc" style="left:87px;width:78px;top:330px;">Enddatum<br>(Tagesende)</div>
<div class="hc" style="left:166px;width:69px;top:330px;">Depotwert<br>Beginn</div>
<div class="hc" style="left:236px;width:68px;top:330px;">Depotwert<br>Ende</div>
<div class="hc" style="left:305px;width:80px;top:330px;">Perioden-<br>performance</div>
<div class="hc" style="left:386px;width:85px;top:330px;">Verfügbares<br>Kapital Beginn<br>(und DVK)</div>
<div class="hc" style="left:472px;width:79px;top:330px;">Depotwert-<br>veränderung</div>
<div class="hc" style="left:552px;width:70px;top:330px;">Perioden-<br>Länge<br>(DVK-Tage)</div>
<div class="hc" style="left:623px;width:69px;top:330px;">EK-<br>Änderung</div>
<div class="hc" style="left:693px;width:63px;top:330px;">Summe<br>portfolio-<br>exogen</div>
<div class="hc" style="left:757px;width:126px;top:330px;">Summe zusätzlicher<br>exogener Bewegungen</div>
<div class="num" style="right:818px;top:367.0px;">31.12.07</div>
<div class="num" style="right:739px;top:367.0px;">01.01.08</div>
<div class="num" style="right:669px;top:367.0px;">0</div>
<div class="num" style="right:600px;top:367.0px;">0</div>
<div class="num" style="right:519px;top:367.0px;">0%</div>
<div class="num" style="right:433px;top:367.0px;">0</div>
<div class="num" style="right:353px;top:367.0px;">0</div>
<div class="num" style="right:282px;top:367.0px;">0</div>
<div class="num" style="right:212px;top:367.0px;">210.141,00</div>
<div class="num" style="right:148px;top:367.0px;">0</div>
<div class="num" style="right:21px;top:367.0px;">0</div>
<div class="num" style="right:818px;top:380.1px;">01.01.08</div>
<div class="num" style="right:739px;top:380.1px;">01.01.08</div>
<div class="num" style="right:669px;top:380.1px;">210.141,00</div>
<div class="num" style="right:600px;top:380.1px;">210.122,80</div>
<div class="num" style="right:519px;top:380.1px;">-0,01%</div>
<div class="num" style="right:433px;top:380.1px;">210.141,00</div>
<div class="num" style="right:353px;top:380.1px;">-18,20</div>
<div class="num" style="right:282px;top:380.1px;">0</div>
<div class="num" style="right:212px;top:380.1px;">0</div>
<div class="num" style="right:148px;top:380.1px;">0</div>
<div class="num" style="right:21px;top:380.1px;">0</div>
<div class="num" style="right:818px;top:393.2px;">01.01.08</div>
<div class="num" style="right:739px;top:393.2px;">02.01.08</div>
<div class="num" style="right:669px;top:393.2px;">210.122,80</div>
<div class="num" style="right:600px;top:393.2px;">210.046,80</div>
<div class="num" style="right:519px;top:393.2px;">-0,04%</div>
<div class="num" style="right:433px;top:393.2px;">210.141,00</div>
<div class="num" style="right:353px;top:393.2px;">-76,00</div>
<div class="num" style="right:282px;top:393.2px;">1,00</div>
<div class="num" style="right:212px;top:393.2px;">9.702,00</div>
<div class="num" style="right:148px;top:393.2px;">0</div>
<div class="num" style="right:21px;top:393.2px;">0</div>
<div class="num" style="right:818px;top:406.3px;">02.01.08</div>
<div class="num" style="right:739px;top:406.3px;">02.01.08</div>
<div class="num" style="right:669px;top:406.3px;">219.748,80</div>
<div class="num" style="right:600px;top:406.3px;">219.736,40</div>
<div class="num" style="right:519px;top:406.3px;">-0,01%</div>
<div class="num" style="right:433px;top:406.3px;">219.843,00</div>
<div class="num" style="right:353px;top:406.3px;">-12,40</div>
<div class="num" style="right:282px;top:406.3px;">0</div>
<div class="num" style="right:212px;top:406.3px;">0</div>
<div class="num" style="right:148px;top:406.3px;">0</div>
<div class="num" style="right:21px;top:406.3px;">0</div>
<div class="num" style="right:818px;top:419.4px;">02.01.08</div>
<div class="num" style="right:739px;top:419.4px;">09.04.09</div>
<div class="num" style="right:669px;top:419.4px;">219.736,40</div>
<div class="num" style="right:600px;top:419.4px;">212.101,63</div>
<div class="num" style="right:519px;top:419.4px;">-3,47%</div>
<div class="num" style="right:433px;top:419.4px;">219.843,00</div>
<div class="num" style="right:353px;top:419.4px;">-7.634,77</div>
<div class="num" style="right:282px;top:419.4px;">331,00</div>
<div class="num" style="right:212px;top:419.4px;">0</div>
<div class="num" style="right:148px;top:419.4px;">0</div>
<div class="num" style="right:21px;top:419.4px;">-58,78</div>
<div class="num" style="right:818px;top:432.5px;">09.04.09</div>
<div class="num" style="right:739px;top:432.5px;">04.05.09</div>
<div class="num" style="right:669px;top:432.5px;">212.042,85</div>
<div class="num" style="right:600px;top:432.5px;">216.010,87</div>
<div class="num" style="right:519px;top:432.5px;">1,87%</div>
<div class="num" style="right:433px;top:432.5px;">219.784,22</div>
<div class="num" style="right:353px;top:432.5px;">3.968,02</div>
<div class="num" style="right:282px;top:432.5px;">17,00</div>
<div class="num" style="right:212px;top:432.5px;">0</div>
<div class="num" style="right:148px;top:432.5px;">0</div>
<div class="num" style="right:21px;top:432.5px;">-218,34</div>
<div class="num" style="right:818px;top:445.6px;">04.05.09</div>
<div class="num" style="right:739px;top:445.6px;">30.04.10</div>
<div class="num" style="right:669px;top:445.6px;">215.792,53</div>
<div class="num" style="right:600px;top:445.6px;">233.231,08</div>
<div class="num" style="right:519px;top:445.6px;">8,08%</div>
<div class="num" style="right:433px;top:445.6px;">219.565,88</div>
<div class="num" style="right:353px;top:445.6px;">17.438,55</div>
<div class="num" style="right:282px;top:445.6px;">259,00</div>
<div class="num" style="right:212px;top:445.6px;">0</div>
<div class="num" style="right:148px;top:445.6px;">0</div>
<div class="num" style="right:21px;top:445.6px;">-142,76</div>
<div class="num" style="right:818px;top:458.7px;">30.04.10</div>
<div class="num" style="right:739px;top:458.7px;">04.07.10</div>
<div class="num" style="right:669px;top:458.7px;">233.088,32</div>
<div class="num" style="right:600px;top:458.7px;">236.282,94</div>
<div class="num" style="right:519px;top:458.7px;">1,37%</div>
<div class="num" style="right:433px;top:458.7px;">219.423,12</div>
<div class="num" style="right:353px;top:458.7px;">3.194,62</div>
<div class="num" style="right:282px;top:458.7px;">46,00</div>
<div class="num" style="right:212px;top:458.7px;">0</div>
<div class="num" style="right:148px;top:458.7px;">0</div>
<div class="num" style="right:21px;top:458.7px;">-363,92</div>
<div class="num" style="right:818px;top:471.8px;">04.07.10</div>
<div class="num" style="right:739px;top:471.8px;">18.02.11</div>
<div class="num" style="right:669px;top:471.8px;">235.919,02</div>
<div class="num" style="right:600px;top:471.8px;">246.187,83</div>
<div class="num" style="right:519px;top:471.8px;">4,35%</div>
<div class="num" style="right:433px;top:471.8px;">219.059,20</div>
<div class="num" style="right:353px;top:471.8px;">10.268,81</div>
<div class="num" style="right:282px;top:471.8px;">164,00</div>
<div class="num" style="right:212px;top:471.8px;">0</div>
<div class="num" style="right:148px;top:471.8px;">0</div>
<div class="num" style="right:21px;top:471.8px;">-27,97</div>
<div class="num" style="right:818px;top:484.9px;">18.02.11</div>
<div class="num" style="right:739px;top:484.9px;">14.04.11</div>
<div class="num" style="right:669px;top:484.9px;">246.159,86</div>
<div class="num" style="right:600px;top:484.9px;">243.128,05</div>
<div class="num" style="right:519px;top:484.9px;">-1,23%</div>
<div class="num" style="right:433px;top:484.9px;">219.031,23</div>
<div class="num" style="right:353px;top:484.9px;">-3.031,80</div>
<div class="num" style="right:282px;top:484.9px;">39,00</div>
<div class="num" style="right:212px;top:484.9px;">0</div>
<div class="num" style="right:148px;top:484.9px;">0</div>
<div class="num" style="right:21px;top:484.9px;">-231,62</div>
<div class="num" style="right:818px;top:498.0px;">14.04.11</div>
<div class="num" style="right:739px;top:498.0px;">09.05.11</div>
<div class="num" style="right:669px;top:498.0px;">242.896,43</div>
<div class="num" style="right:600px;top:498.0px;">249.025,71</div>
<div class="num" style="right:519px;top:498.0px;">2,52%</div>
<div class="num" style="right:433px;top:498.0px;">218.799,61</div>
<div class="num" style="right:353px;top:498.0px;">6.129,27</div>
<div class="num" style="right:282px;top:498.0px;">17,00</div>
<div class="num" style="right:212px;top:498.0px;">0</div>
<div class="num" style="right:148px;top:498.0px;">0</div>
<div class="num" style="right:21px;top:498.0px;">-184,75</div>
<div class="num" style="right:818px;top:511.1px;">09.05.11</div>
<div class="num" style="right:739px;top:511.1px;">04.07.11</div>
<div class="num" style="right:669px;top:511.1px;">248.840,96</div>
<div class="num" style="right:600px;top:511.1px;">249.609,01</div>
<div class="num" style="right:519px;top:511.1px;">0,31%</div>
<div class="num" style="right:433px;top:511.1px;">218.614,86</div>
<div class="num" style="right:353px;top:511.1px;">768,05</div>
<div class="num" style="right:282px;top:511.1px;">40,00</div>
<div class="num" style="right:212px;top:511.1px;">0</div>
<div class="num" style="right:148px;top:511.1px;">0</div>
<div class="num" style="right:21px;top:511.1px;">-314,92</div>
<div class="num" style="right:818px;top:524.2px;">04.07.11</div>
<div class="num" style="right:739px;top:524.2px;">01.03.12</div>
<div class="num" style="right:669px;top:524.2px;">249.294,09</div>
<div class="num" style="right:600px;top:524.2px;">257.118,02</div>
<div class="num" style="right:519px;top:524.2px;">3,14%</div>
<div class="num" style="right:433px;top:524.2px;">218.299,94</div>
<div class="num" style="right:353px;top:524.2px;">7.823,93</div>
<div class="num" style="right:282px;top:524.2px;">173,00</div>
<div class="num" style="right:212px;top:524.2px;">0</div>
<div class="num" style="right:148px;top:524.2px;">0</div>
<div class="num" style="right:21px;top:524.2px;">-139,26</div>
<div class="num" style="right:818px;top:537.3px;">01.03.12</div>
<div class="num" style="right:739px;top:537.3px;">03.07.13</div>
<div class="num" style="right:669px;top:537.3px;">256.978,76</div>
<div class="num" style="right:600px;top:537.3px;">262.496,45</div>
<div class="num" style="right:519px;top:537.3px;">2,15%</div>
<div class="num" style="right:433px;top:537.3px;">218.160,68</div>
<div class="num" style="right:353px;top:537.3px;">5.517,69</div>
<div class="num" style="right:282px;top:537.3px;">349,00</div>
<div class="num" style="right:212px;top:537.3px;">0</div>
<div class="num" style="right:148px;top:537.3px;">0</div>
<div class="num" style="right:21px;top:537.3px;">0</div>
<div class="num" style="right:818px;top:550.4px;">03.07.13</div>
<div class="num" style="right:739px;top:550.4px;">03.07.13</div>
<div class="num" style="right:669px;top:550.4px;">262.496,45</div>
<div class="num" style="right:600px;top:550.4px;">262.496,45</div>
<div class="num" style="right:519px;top:550.4px;">0%</div>
<div class="num" style="right:433px;top:550.4px;">218.160,68</div>
<div class="num" style="right:353px;top:550.4px;">0</div>
<div class="num" style="right:282px;top:550.4px;">1,00</div>
<div class="num" style="right:212px;top:550.4px;">0</div>
<div class="num" style="right:148px;top:550.4px;">0</div>
<div class="num" style="right:21px;top:550.4px;">0</div>
<div style="left:8px;top:563px;width:877px;height:1px;background:#2a2a2a;"></div>
<div class="num" style="right:519px;top:566px;font-weight:bold;">20,24%</div>
<div class="num" style="right:433px;top:566px;font-weight:bold;">219.018,63</div>
<div class="num" style="right:353px;top:566px;font-weight:bold;">44.335,77</div>
<div style="left:8px;top:583px;width:884.3px;height:51px;background:#c1c1c1;border-bottom:1px solid #a9a9a9;"></div>
<div class="t" style="left:17.5px;top:587.0px;font-size:8.8px;line-height:12px;">Klassische Performance (lt. Tabellenwerten)</div>
<div class="t" style="right:627.5px;top:587.0px;font-size:8.8px;line-height:12px;">---</div>
<div class="t" style="left:287.5px;top:587.0px;font-size:8.8px;line-height:12px;">Zeitgewichtete Performance (lt. Tabellenwerten)</div>
<div class="t" style="right:353.5px;top:587.0px;font-size:8.8px;line-height:12px;">20,24%</div>
<div class="t" style="left:563px;top:587.0px;font-size:8.8px;line-height:12px;">&quot;Zeitgew. kum EK&quot;-Performance (lt. Tabellenwerten)</div>
<div class="t" style="left:803px;top:587.0px;font-size:8.8px;line-height:12px;">---</div>
<div class="t" style="left:17.5px;top:602.0px;font-size:8.8px;line-height:12px;">Klassische Performance (lt. Depotbewertung)</div>
<div class="t" style="right:627.5px;top:602.0px;font-size:8.8px;line-height:12px;">---</div>
<div class="t" style="left:287.5px;top:602.0px;font-size:8.8px;line-height:12px;">Zeitgewichtete Performance (lt. Depotbewertung)</div>
<div class="t" style="right:353.5px;top:602.0px;font-size:8.8px;line-height:12px;">20,24%</div>
<div class="t" style="left:563px;top:602.0px;font-size:8.8px;line-height:12px;">&quot;Zeitgew. kum EK&quot;-Performance (lt. Depotbewertung)</div>
<div class="t" style="left:803px;top:602.0px;font-size:8.8px;line-height:12px;">---</div>
<div class="t" style="left:17.5px;top:617.0px;font-size:8.8px;line-height:12px;">DVK (lt. Depotbewertung)</div>
<div class="t" style="right:627.5px;top:617.0px;font-size:8.8px;line-height:12px;">219.018,63</div>
<div style="left:8px;top:634px;width:883.6px;height:15px;background:#f1eeed;box-shadow:1px 1px 0 #a4acba, inset 0 -1px 0 #faf9f9;"></div>
<div class="t" style="left:9.5px;top:636.0px;font-size:8.8px;line-height:12px;">Objekte: 15</div>
<div style="left:7px;top:650px;width:887px;height:14px;background:#f0f0f0;"></div>
</body></html>
